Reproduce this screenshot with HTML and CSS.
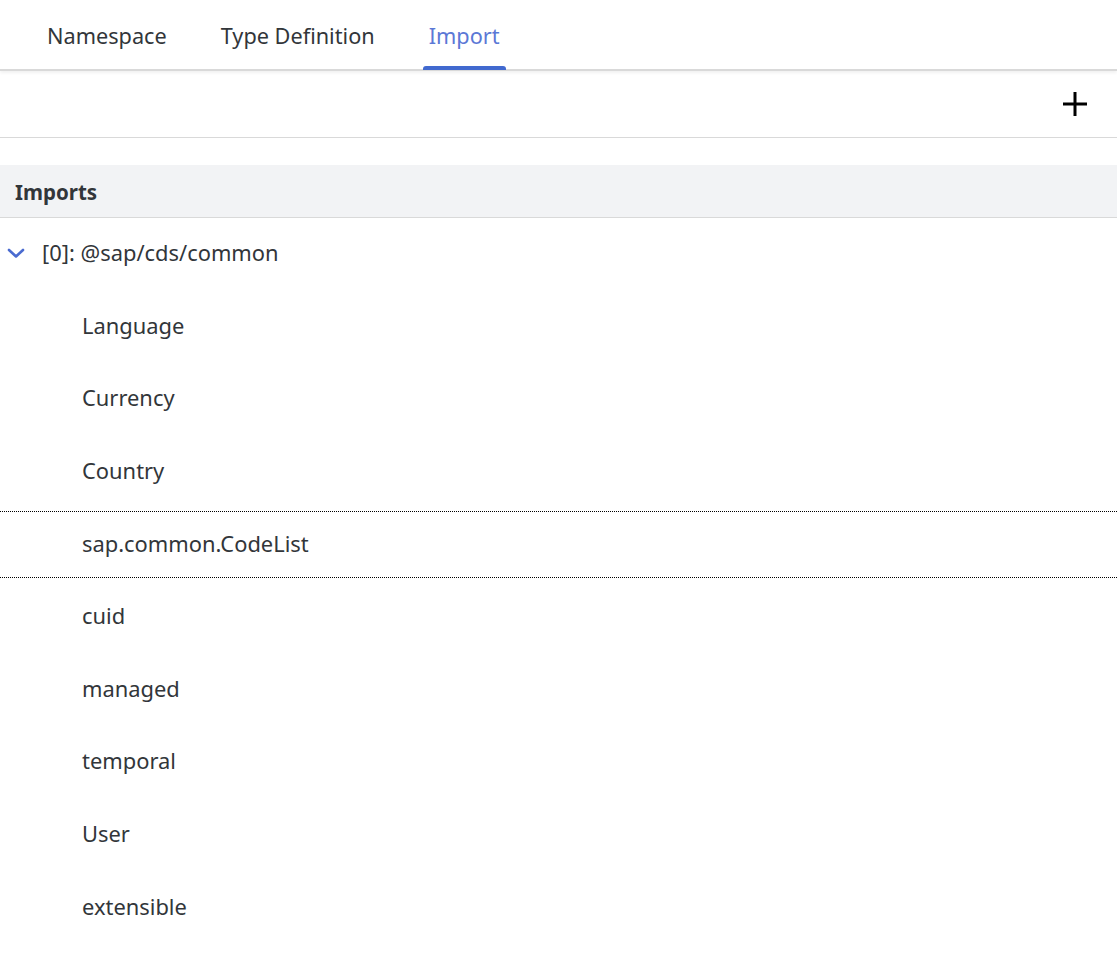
FILE: index.html
```html
<!DOCTYPE html>
<html lang="en">
<head>
<meta charset="utf-8">
<title>Imports</title>
<link rel="stylesheet" href="styles.css">
</head>
<body>
<div class="tabs">
  <div class="tab">Namespace</div>
  <div class="tab">Type Definition</div>
  <div class="tab active">Import</div>
</div>
<div class="toolbar">
  <button class="add" aria-label="Add">
    <svg width="24" height="24" viewBox="0 0 24 24"><path d="M12 0v24M0 12h24" stroke="#000" stroke-width="3" fill="none"/></svg>
  </button>
</div>
<div class="section-head">Imports</div>
<div class="tree">
  <div class="row parent">
    <svg class="chev" width="18" height="12" viewBox="0 0 18 12"><path d="M2 3l7 6.5 7-6.5" stroke="#4a6bd0" stroke-width="2.6" fill="none" stroke-linecap="round" stroke-linejoin="round"/></svg>
    <span>[0]: @sap/cds/common</span>
  </div>
  <div class="row child">Language</div>
  <div class="row child">Currency</div>
  <div class="row child">Country</div>
  <div class="row child focused">sap.common.CodeList</div>
  <div class="row child">cuid</div>
  <div class="row child">managed</div>
  <div class="row child">temporal</div>
  <div class="row child">User</div>
  <div class="row child">extensible</div>
</div>
</body>
</html>
```
FILE: styles.css
```css
html, body {
  margin: 0;
  padding: 0;
  background: #fff;
}
body {
  font-family: "Noto Sans", "Open Sans", sans-serif;
  color: #32363a;
  width: 1117px;
  overflow: hidden;
}
.tabs {
  display: flex;
  height: 69px;
  padding-left: 41px;
  gap: 42px;
  border-bottom: 2px solid #d9d9d9;
  box-shadow: 0 2px 3px rgba(0,0,0,0.06);
  position: relative;
}
.tab {
  position: relative;
  padding: 0 6px;
  font-size: 21.7px;
  line-height: 71px;
  height: 69px;
  color: #32363a;
}
.tab.active {
  color: #5b78d6;
}
.tab.active::after {
  content: "";
  position: absolute;
  left: 0;
  right: 0;
  bottom: -1px;
  height: 4px;
  background: #4169cf;
  border-radius: 3px 3px 0 0;
}
.toolbar {
  height: 66px;
  display: flex;
  align-items: center;
  justify-content: flex-end;
  padding-right: 30px;
  border-bottom: 1px solid #d9d9d9;
}
.add {
  border: 0;
  background: none;
  padding: 0;
  width: 24px;
  height: 24px;
  display: flex;
}
.section-head {
  margin-top: 27px;
  height: 53px;
  box-sizing: border-box;
  padding-top: 3px;
  line-height: 49px;
  background: #f2f3f5;
  border-bottom: 1px solid #d9d9d9;
  padding-left: 15px;
  font-weight: 700;
  font-size: 20.5px;
  color: #32363a;
}
.row {
  box-sizing: border-box;
  height: 72.6px;
  padding-bottom: 3px;
  display: flex;
  align-items: center;
  font-size: 21.9px;
  position: relative;
}
.row.parent {
  padding-left: 7px;
  gap: 17px;
}
.row.child {
  padding-left: 82px;
}
.row.focused::before {
  content: "";
  position: absolute;
  left: 0;
  right: 0;
  top: 3px;
  bottom: 3px;
  border-top: 1px dotted #000;
  border-bottom: 1px dotted #000;
}
```
